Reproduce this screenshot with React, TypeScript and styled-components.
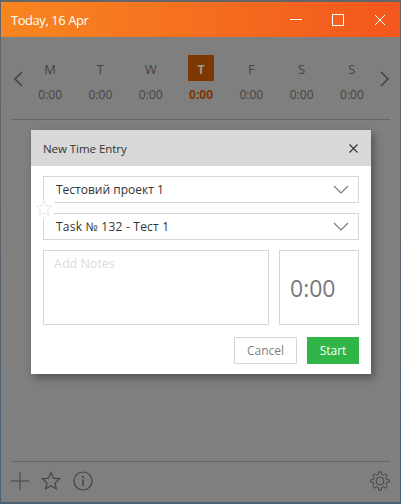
import React from "react";
import styled, { createGlobalStyle } from "styled-components";

const Global = createGlobalStyle`
  html, body { margin: 0; padding: 0; background: #54606a; }
  body { font-family: "Open Sans", "Noto Sans", sans-serif; }
  * { box-sizing: border-box; }
`;

const Screen = styled.div`
  width: 401px;
  height: 504px;
  padding: 2px 1px 2px 1px;
  background: linear-gradient(180deg, #62666a, #4c6172);
`;

const Win = styled.div`
  position: relative;
  height: 100%;
  display: flex;
  flex-direction: column;
  background: #7f7f7f;
`;

const TitleBar = styled.header`
  height: 35px;
  flex: none;
  display: flex;
  align-items: center;
  padding-left: 10px;
  color: #fff;
  font-size: 13px;
  background: linear-gradient(90deg, #f78620, #f4571e);
`;

const TitleText = styled.div`
  flex: 1;
  margin-top: 1px;
  letter-spacing: -0.45px;
`;

const WinButton = styled.button`
  width: 42px;
  height: 35px;
  padding: 0 0 0 2px;
  border: 0;
  background: none;
  display: flex;
  align-items: center;
  justify-content: center;
`;

const WinButtons = styled.div`
  display: flex;
`;

const Week = styled.section`
  height: 83px;
  flex: none;
  margin: 0 10px;
  border-bottom: 1px solid #666;
  display: flex;
  align-items: flex-start;
  padding-top: 18px;
`;

const Arrow = styled.svg`
  flex: none;
  width: 14px;
  height: 18px;
  margin-top: 15px;
`;

const Days = styled.div`
  flex: 1;
  display: grid;
  grid-template-columns: repeat(7, 50.3px);
`;

const Day = styled.div`
  display: flex;
  flex-direction: column;
  align-items: center;
`;

const DayLetter = styled.div<{ $active?: boolean }>`
  width: 26px;
  height: 26px;
  padding-top: 1px;
  display: flex;
  align-items: center;
  justify-content: center;
  font-size: 13px;
  font-weight: ${(p) => (p.$active ? 700 : 400)};
  color: ${(p) => (p.$active ? "#999" : "#444")};
  background: ${(p) => (p.$active ? "#7c3800" : "transparent")};
`;

const DayTime = styled.div<{ $active?: boolean }>`
  margin-top: 5px;
  font-size: 12px;
  line-height: 17px;
  font-weight: ${(p) => (p.$active ? 700 : 400)};
  color: ${(p) => (p.$active ? "#7c3800" : "#444")};
`;

const Spacer = styled.div`
  flex: 1;
`;

const Footer = styled.footer`
  height: 41px;
  flex: none;
  margin: 0 10px;
  border-top: 1px solid #666;
  display: flex;
  align-items: center;
  gap: 12px;
  padding-bottom: 2px;
`;

const FooterIcon = styled.svg`
  flex: none;
  display: block;
`;

const FooterEnd = styled.div`
  margin-left: auto;
  display: flex;
`;

const Modal = styled.div`
  position: absolute;
  left: 30px;
  top: 128px;
  width: 340px;
  height: 244px;
  background: #fff;
  box-shadow: 3px 4px 8px rgba(0, 0, 0, 0.35);
  display: flex;
  flex-direction: column;
`;

const ModalHead = styled.div`
  height: 36px;
  flex: none;
  background: #d8d8d8;
  display: flex;
  align-items: center;
  justify-content: space-between;
  padding: 0 13px 0 12px;
  font-size: 11.5px;
  font-weight: 500;
  letter-spacing: -0.05px;
  color: #333;
`;

const ModalBody = styled.div`
  position: relative;
  flex: 1;
  display: flex;
  flex-direction: column;
  padding: 10px 12px;
`;

const Select = styled.div`
  height: 27px;
  border: 1px solid #d6d6d6;
  display: flex;
  align-items: center;
  justify-content: space-between;
  padding: 0 3px 0 12px;
  margin-bottom: 10px;
  font-size: 12px;
  color: #333;
  svg { margin-right: 6px; }
`;

const TaskName = styled.span`
  letter-spacing: 0.22px;
`;

const FavStar = styled.svg`
  position: absolute;
  left: 5px;
  top: 34px;
  background: #fff;
`;

const Fields = styled.div`
  display: grid;
  grid-template-columns: 226px 80px;
  gap: 10px;
  height: 75px;
`;

const Notes = styled.div`
  border: 1px solid #d6d6d6;
  padding: 4px 10px;
  font-size: 12.5px;
  line-height: 18px;
  color: #dcdcdc;
`;

const Duration = styled.div`
  border: 1px solid #d6d6d6;
  display: flex;
  align-items: center;
  padding-left: 10px;
  font-size: 23px;
  color: #7a7a7a;
`;

const Actions = styled.div`
  display: flex;
  justify-content: flex-end;
  gap: 10px;
  margin-top: 12px;
`;

const Button = styled.button<{ $primary?: boolean }>`
  height: 27px;
  width: ${(p) => (p.$primary ? "52px" : "63px")};
  padding: 0;
  font: 400 12px "Open Sans", sans-serif;
  border: 1px solid ${(p) => (p.$primary ? "#2fb548" : "#d6d6d6")};
  background: ${(p) => (p.$primary ? "#2fb548" : "#fff")};
  color: ${(p) => (p.$primary ? "#fff" : "#808080")};
`;

const days = ["M", "T", "W", "T", "F", "S", "S"];
const starPath = "M10 1.6l2.5 5.6 6.1.6-4.6 4.1 1.3 6-5.3-3.1-5.3 3.1 1.3-6L1.4 7.8l6.1-.6z";

const gearPath = (() => {
  const teeth = 8;
  const cx = 10;
  const cy = 10;
  const pts: string[] = [];
  for (let i = 0; i < teeth; i++) {
    const a = (i / teeth) * Math.PI * 2;
    const step = Math.PI / teeth;
    const p = (r: number, t: number) =>
      `${(cx + r * Math.cos(t)).toFixed(2)} ${(cy + r * Math.sin(t)).toFixed(2)}`;
    pts.push(p(6.8, a - step * 0.62), p(9.3, a - step * 0.32), p(9.3, a + step * 0.32), p(6.8, a + step * 0.62));
  }
  return `M${pts.join("L")}Z`;
})();

const Chevron = () => (
  <svg width="16" height="9" viewBox="0 0 16 9" fill="none" stroke="#777" strokeWidth="1.1">
    <path d="M1 1l7 7 7-7" />
  </svg>
);

export default function App() {
  return (
    <Screen>
      <Global />
      <Win>
        <TitleBar>
          <TitleText>Today, 16 Apr</TitleText>
          <WinButtons>
            <WinButton aria-label="Minimize">
              <svg width="12" height="2" viewBox="0 0 12 2"><path d="M0 .5h12" stroke="#fff" /></svg>
            </WinButton>
            <WinButton aria-label="Maximize">
              <svg width="12" height="12" viewBox="0 0 12 12"><rect x=".5" y=".5" width="11" height="11" fill="none" stroke="#fff" /></svg>
            </WinButton>
            <WinButton aria-label="Close">
              <svg width="12" height="12" viewBox="0 0 12 12"><path d="M1 1l10 10M11 1L1 11" stroke="#fff" /></svg>
            </WinButton>
          </WinButtons>
        </TitleBar>

        <Week>
          <Arrow viewBox="0 0 14 18" fill="none" stroke="#444" strokeWidth="1.6"><path d="M11 2L4 9l7 7" /></Arrow>
          <Days>
            {days.map((d, i) => (
              <Day key={i}>
                <DayLetter $active={i === 3}>{d}</DayLetter>
                <DayTime $active={i === 3}>0:00</DayTime>
              </Day>
            ))}
          </Days>
          <Arrow viewBox="0 0 14 18" fill="none" stroke="#444" strokeWidth="1.6"><path d="M4 2l7 7-7 7" /></Arrow>
        </Week>

        <Spacer />

        <Footer>
          <FooterIcon width="18" height="18" viewBox="0 0 18 18" fill="none" stroke="#444"><path d="M9 0v18M0 9h18" /></FooterIcon>
          <FooterIcon width="20" height="20" viewBox="0 0 20 20" fill="none" stroke="#444" strokeWidth="1.2"><path d={starPath} /></FooterIcon>
          <FooterIcon width="20" height="20" viewBox="0 0 20 20" fill="none" stroke="#444" strokeWidth="1.2">
            <circle cx="10" cy="10" r="9" />
            <path d="M10 8.5V15" strokeWidth="1.6" />
            <path d="M10 5v1.8" strokeWidth="1.8" />
          </FooterIcon>
          <FooterEnd>
            <FooterIcon width="20" height="20" viewBox="0 0 20 20" fill="none" stroke="#444" strokeWidth="1">
              <path d={gearPath} />
              <circle cx="10" cy="10" r="3.9" />
            </FooterIcon>
          </FooterEnd>
        </Footer>

        <Modal>
          <ModalHead>
            <span>New Time Entry</span>
            <svg width="9" height="9" viewBox="0 0 9 9" fill="none" stroke="#333" strokeWidth="1.1"><path d="M.5.5l8 8M8.5.5l-8 8" /></svg>
          </ModalHead>
          <ModalBody>
            <Select>Тестовий проект 1<Chevron /></Select>
            <Select><TaskName>Task № 132 - Тест 1</TaskName><Chevron /></Select>
            <FavStar width="18" height="19" viewBox="1 1 20 21" fill="none" stroke="#e2e2e2" strokeWidth="1"><path d={starPath} /></FavStar>
            <Fields>
              <Notes>Add Notes</Notes>
              <Duration>0:00</Duration>
            </Fields>
            <Actions>
              <Button>Cancel</Button>
              <Button $primary>Start</Button>
            </Actions>
          </ModalBody>
        </Modal>
      </Win>
    </Screen>
  );
}
